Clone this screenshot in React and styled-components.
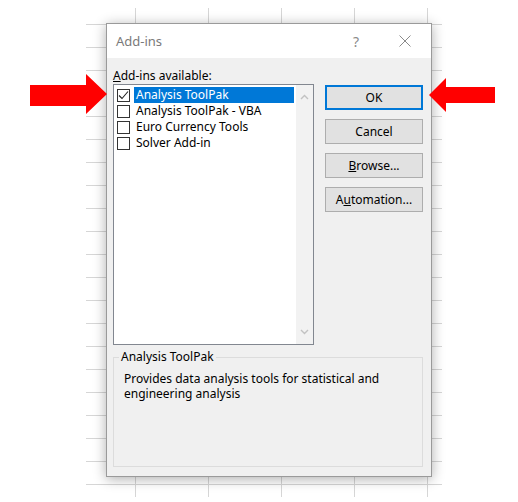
import React from "react";
import styled, { createGlobalStyle, css } from "styled-components";

const GlobalStyle = createGlobalStyle`
  html, body { margin: 0; padding: 0; background: #ffffff; }
  body { font-family: "Segoe UI", "Noto Sans", sans-serif; }
  * { box-sizing: border-box; }
`;

const Page = styled.div`
  position: relative;
  width: 518px;
  height: 502px;
  overflow: hidden;
  padding: 8px 0 0 86px;
  background: #ffffff;
`;

const Sheet = styled.div`
  width: 356px;
  height: 489px;
  padding: 15px 0 0 20px;
  background-image: linear-gradient(to right, #d6d6d6 1px, transparent 1px),
    linear-gradient(to bottom, #d6d6d6 1px, transparent 1px);
  background-size: 73px 100%, 100% 23px;
  background-position: 49px 0, 0 16px;
`;

const Dialog = styled.div`
  width: 326px;
  height: 454px;
  border: 1px solid #9a9a9a;
  background: #f0f0f0;
  box-shadow: 0 2px 12px rgba(0, 0, 0, 0.32);
  display: flex;
  flex-direction: column;
`;

const TitleBar = styled.div`
  height: 34px;
  background: #ffffff;
  display: flex;
  align-items: center;
  padding-left: 9px;
`;

const Title = styled.div`
  flex: 1;
  font-size: 13px;
  color: #7a7a7a;
`;

const TitleButton = styled.div`
  width: ${(p) => p.$w}px;
  height: 34px;
  display: flex;
  align-items: center;
  justify-content: center;
  color: #8a8a8a;
  font-size: 14px;
`;

const Body = styled.div`
  flex: 1;
  padding: 9px 8px 10px 6px;
  display: flex;
  flex-direction: column;
`;

const Top = styled.div`
  display: flex;
  gap: 11px;
`;

const LeftCol = styled.div`
  width: 201px;
  display: flex;
  flex-direction: column;
`;

const Label = styled.div`
  height: 17px;
  line-height: 17px;
  font-size: 12px;
  color: #000;
`;

const ListBox = styled.div`
  height: 261px;
  border: 1px solid #828790;
  background: #ffffff;
  display: flex;
`;

const Items = styled.div`
  flex: 1;
  padding: 2px 2px 0 3px;
  display: flex;
  flex-direction: column;
`;

const Row = styled.div`
  height: 16px;
  display: flex;
  align-items: center;
`;

const Box = styled.div`
  width: 13px;
  height: 13px;
  border: 1px solid #333333;
  background: #ffffff;
  margin-right: 4px;
  display: flex;
  align-items: center;
  justify-content: center;
`;

const ItemText = styled.div`
  flex: 1;
  height: 16px;
  line-height: 16px;
  padding-left: 2px;
  font-size: 12px;
  white-space: nowrap;
  color: ${(p) => (p.$selected ? "#ffffff" : "#000000")};
  background: ${(p) => (p.$selected ? "#0078d7" : "transparent")};
`;

const Scrollbar = styled.div`
  width: 17px;
  background: #f2f2f2;
  display: flex;
  flex-direction: column;
  justify-content: space-between;
`;

const ScrollBtn = styled.div`
  height: 24px;
  display: flex;
  align-items: center;
  justify-content: center;
`;

const RightCol = styled.div`
  width: 98px;
  display: flex;
  flex-direction: column;
  gap: 9px;
  padding-top: 18px;
`;

const Button = styled.div`
  height: 25px;
  border: 1px solid #adadad;
  background: #e1e1e1;
  font-size: 12px;
  color: #000;
  display: flex;
  align-items: center;
  justify-content: center;
  ${(p) =>
    p.$default &&
    css`
      border: 2px solid #0078d7;
    `}
`;

const Group = styled.fieldset`
  margin: 4px 0 0;
  height: 118px;
  border: 1px solid #dcdcdc;
  padding: 0;
  min-width: 0;
`;

const Legend = styled.legend`
  padding: 0 2px;
  margin-left: 5px;
  line-height: 16px;
  font-size: 12px;
  color: #000;
`;

const Desc = styled.p`
  margin: 6px 0 0;
  padding: 0 10px;
  line-height: 15px;
  font-size: 12px;
  color: #000;
`;

const Arrow = styled.svg`
  position: absolute;
  left: ${(p) => p.$x}px;
  top: ${(p) => p.$y}px;
`;

const U = styled.span`
  text-decoration: underline;
`;

const items = [
  { name: "Analysis ToolPak", checked: true, selected: true },
  { name: "Analysis ToolPak - VBA" },
  { name: "Euro Currency Tools" },
  { name: "Solver Add-in" },
];

const Check = () => (
  <svg width="11" height="11" viewBox="0 0 11 11">
    <path d="M1 5.5 L4 8.5 L10 1.5" fill="none" stroke="#222" strokeWidth="1.1" />
  </svg>
);

const Chevron = ({ down }) => (
  <svg width="9" height="6" viewBox="0 0 9 6">
    <path
      d={down ? "M1 1 L4.5 4.5 L8 1" : "M1 5 L4.5 1.5 L8 5"}
      fill="none"
      stroke="#c2c2c2"
      strokeWidth="1.4"
    />
  </svg>
);

export default function App() {
  return (
    <>
      <GlobalStyle />
      <Page>
        <Sheet>
          <Dialog>
            <TitleBar>
              <Title>Add-ins</Title>
              <TitleButton $w={46}>?</TitleButton>
              <TitleButton $w={52}>
                <svg width="12" height="12" viewBox="0 0 12 12">
                  <path d="M0.5 0.5 L11.5 11.5 M11.5 0.5 L0.5 11.5" stroke="#8a8a8a" strokeWidth="1" />
                </svg>
              </TitleButton>
            </TitleBar>
            <Body>
              <Top>
                <LeftCol>
                  <Label>
                    <U>A</U>dd-ins available:
                  </Label>
                  <ListBox>
                    <Items>
                      {items.map((it) => (
                        <Row key={it.name}>
                          <Box>{it.checked && <Check />}</Box>
                          <ItemText $selected={it.selected}>{it.name}</ItemText>
                        </Row>
                      ))}
                    </Items>
                    <Scrollbar>
                      <ScrollBtn>
                        <Chevron />
                      </ScrollBtn>
                      <ScrollBtn>
                        <Chevron down />
                      </ScrollBtn>
                    </Scrollbar>
                  </ListBox>
                </LeftCol>
                <RightCol>
                  <Button $default>OK</Button>
                  <Button>Cancel</Button>
                  <Button>
                    <span>
                      <U>B</U>rowse...
                    </span>
                  </Button>
                  <Button>
                    <span>
                      A<U>u</U>tomation...
                    </span>
                  </Button>
                </RightCol>
              </Top>
              <Group>
                <Legend>Analysis ToolPak</Legend>
                <Desc>
                  Provides data analysis tools for statistical and
                  <br />
                  engineering analysis
                </Desc>
              </Group>
            </Body>
          </Dialog>
        </Sheet>
        <Arrow $x={30} $y={74} width="77" height="40" viewBox="0 0 77 40">
          <polygon points="0,11 56,11 56,0 77,20 56,40 56,32 0,32" fill="#ff0000" />
        </Arrow>
        <Arrow $x={429} $y={78} width="66" height="34" viewBox="0 0 66 34">
          <polygon points="0,17 17,0 17,9 66,9 66,25 17,25 17,34" fill="#ff0000" />
        </Arrow>
      </Page>
    </>
  );
}
